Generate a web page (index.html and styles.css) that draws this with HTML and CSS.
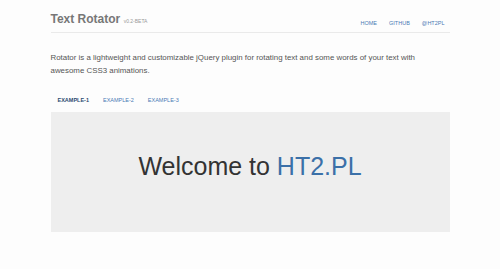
FILE: index.html
```html
<!DOCTYPE html>
<html lang="en">
<head>
    <meta charset="UTF-8">
    <meta name="viewport" content="width=device-width, initial-scale=1.0">
    <title>Text Rotator</title>
    <link rel="stylesheet" href="styles.css">
</head>
<body>
    <div class="container">
        <header class="header">
            <h1 class="brand">Text Rotator <small>v0.2-BETA</small></h1>
            <nav class="nav">
                <a href="#">HOME</a>
                <a href="#">GITHUB</a>
                <a href="#">@HT2PL</a>
            </nav>
        </header>

        <p class="lead">Rotator is a lightweight and customizable jQuery plugin for rotating text and some words of your text with awesome CSS3 animations.</p>

        <ul class="tabs">
            <li class="active"><a href="#">EXAMPLE-1</a></li>
            <li><a href="#">EXAMPLE-2</a></li>
            <li><a href="#">EXAMPLE-3</a></li>
        </ul>

        <div class="demo">
            <h2>Welcome to <span class="rotate">HT2.PL</span></h2>
        </div>
    </div>
</body>
</html>
```

FILE: styles.css
```css
body {
    font-family: 'Liberation Sans', Arial, sans-serif;
    color: #555;
    margin: 0;
    background-color: #fdfdfd;
}
a { color: #4a7bb5; text-decoration: none; }
.container {
    width: 399px;
    margin: 0 auto;
    padding-top: 12px;
}
.header {
    display: flex;
    justify-content: space-between;
    align-items: flex-end;
    border-bottom: 1px solid #eaeaea;
    padding-bottom: 3px;
}
.brand {
    margin: 0;
    font-size: 12px;
    color: #777;
    line-height: 15px;
}
.brand small { font-size: 5px; font-weight: normal; color: #999; }
.nav { display: flex; gap: 12px; padding-right: 5px; padding-bottom: 3px; }
.nav a { font-size: 5.5px; }
.lead {
    font-size: 7.9px;
    line-height: 13px;
    margin: 18px 0 0;
    color: #555;
}
.tabs {
    list-style: none;
    margin: 19px 0 0;
    padding: 0 0 0 7px;
    display: flex;
    gap: 14px;
}
.tabs a { font-size: 5.5px; display: block; padding-bottom: 8px; line-height: 8px; }
.tabs .active a { color: #2c4a70; font-weight: bold; }
.demo {
    background-color: #eeeeee;
    height: 120px;
    display: flex;
    align-items: center;
    justify-content: center;
}
.demo h2 {
    margin: 0 0 12px;
    font-size: 25px;
    font-weight: normal;
    color: #333;
}
.rotate { color: #3b70a8; }
```
